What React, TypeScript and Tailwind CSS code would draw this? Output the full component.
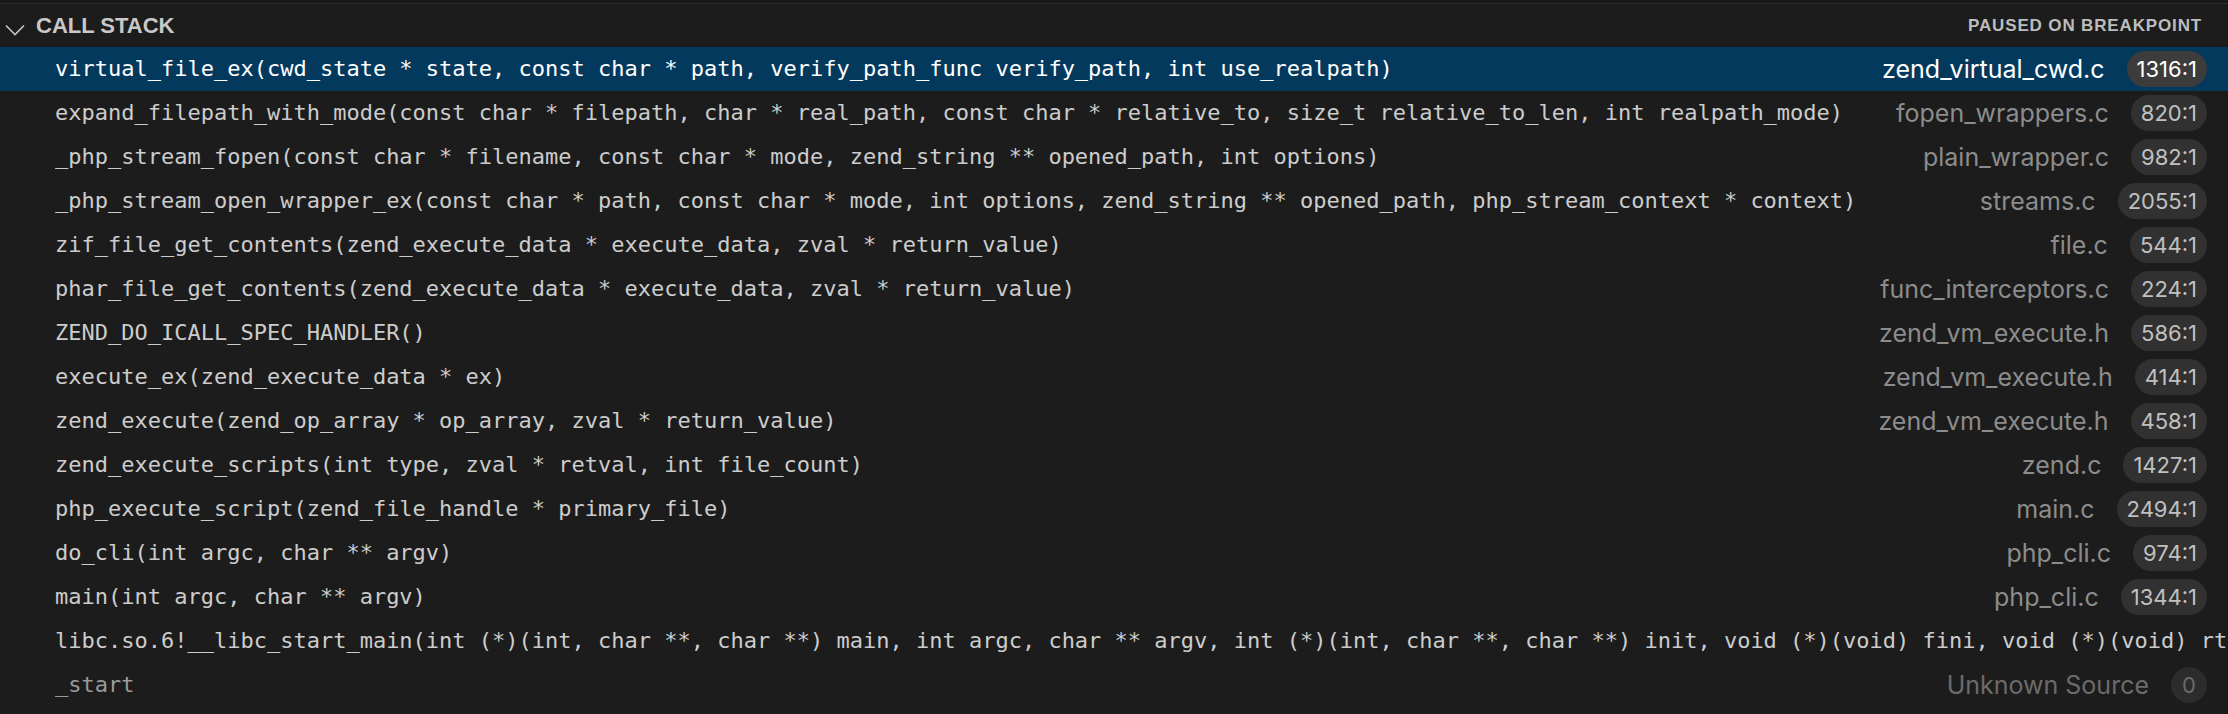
import React from "react";

type Frame = {
  name: string;
  file?: string;
  line?: string;
  dim?: boolean;
};

const frames: Frame[] = [
  { name: "virtual_file_ex(cwd_state * state, const char * path, verify_path_func verify_path, int use_realpath)", file: "zend_virtual_cwd.c", line: "1316:1" },
  { name: "expand_filepath_with_mode(const char * filepath, char * real_path, const char * relative_to, size_t relative_to_len, int realpath_mode)", file: "fopen_wrappers.c", line: "820:1" },
  { name: "_php_stream_fopen(const char * filename, const char * mode, zend_string ** opened_path, int options)", file: "plain_wrapper.c", line: "982:1" },
  { name: "_php_stream_open_wrapper_ex(const char * path, const char * mode, int options, zend_string ** opened_path, php_stream_context * context)", file: "streams.c", line: "2055:1" },
  { name: "zif_file_get_contents(zend_execute_data * execute_data, zval * return_value)", file: "file.c", line: "544:1" },
  { name: "phar_file_get_contents(zend_execute_data * execute_data, zval * return_value)", file: "func_interceptors.c", line: "224:1" },
  { name: "ZEND_DO_ICALL_SPEC_HANDLER()", file: "zend_vm_execute.h", line: "586:1" },
  { name: "execute_ex(zend_execute_data * ex)", file: "zend_vm_execute.h", line: "414:1" },
  { name: "zend_execute(zend_op_array * op_array, zval * return_value)", file: "zend_vm_execute.h", line: "458:1" },
  { name: "zend_execute_scripts(int type, zval * retval, int file_count)", file: "zend.c", line: "1427:1" },
  { name: "php_execute_script(zend_file_handle * primary_file)", file: "main.c", line: "2494:1" },
  { name: "do_cli(int argc, char ** argv)", file: "php_cli.c", line: "974:1" },
  { name: "main(int argc, char ** argv)", file: "php_cli.c", line: "1344:1" },
  { name: "libc.so.6!__libc_start_main(int (*)(int, char **, char **) main, int argc, char ** argv, int (*)(int, char **, char **) init, void (*)(void) fini, void (*)(void) rtld_fini, void * stack_end)" },
  { name: "_start", file: "Unknown Source", line: "0", dim: true },
];

export default function App() {
  return (
    <div className="h-[714px] w-[2228px] overflow-hidden bg-[#1c1c1c]">
      {/* top edge */}
      <div className="h-[3px] bg-[#181818]" />
      <div className="h-px bg-[#2e2e2e]" />

      {/* Section header */}
      <div className="flex h-[43px] items-center pl-[5px] pr-[26px] font-['Liberation_Sans',Arial,sans-serif]">
        <svg width="20" height="12" viewBox="0 0 20 12" className="mt-[8px] shrink-0">
          <path d="M1 1.5 L10 10.5 L19 1.5" fill="none" stroke="#c5c5c5" strokeWidth="1.6" />
        </svg>
        <span className="ml-[11px] text-[22px] font-bold leading-none text-[#c8c8c8]">CALL STACK</span>
        <span className="ml-auto text-[17px] font-bold leading-none tracking-[0.05em] text-[#bdbdbd]">
          PAUSED ON BREAKPOINT
        </span>
      </div>

      {/* Frames */}
      <div>
        {frames.map((f, i) => {
          const selected = i === 0;
          return (
            <div
              key={i}
              className={`flex h-[44px] items-center pl-[55px] ${f.file ? "pr-[21px]" : "pr-0"} ${
                selected ? "bg-[#04395e]" : ""
              }`}
            >
              <span
                className={`min-w-0 flex-1 overflow-hidden whitespace-pre font-['DejaVu_Sans_Mono',monospace] text-[22px] leading-[32px] ${
                  selected ? "text-white" : f.dim ? "text-[#9a9a9a]" : "text-[#cccccc]"
                }`}
              >
                {f.name}
              </span>
              {f.file && (
                <div className="flex shrink-0 items-center pl-6 font-['Inter',sans-serif]">
                  <span
                    className={`text-[25px] leading-[32px] ${
                      selected ? "text-white" : f.dim ? "text-[#6b6b6b]" : "text-[#8c8c8c]"
                    }`}
                  >
                    {f.file}
                  </span>
                  <span
                    className={`ml-[22px] flex h-[36px] items-center rounded-full px-[10px] text-[22px] leading-none ${
                      selected
                        ? "bg-[#3c3c3c] text-white"
                        : f.dim
                        ? "min-w-[36px] justify-center bg-[#2c2c2c] text-[#6b6b6b]"
                        : "bg-[#313131] text-[#c0c0c0]"
                    }`}
                  >
                    {f.line}
                  </span>
                </div>
              )}
            </div>
          );
        })}
      </div>
    </div>
  );
}
